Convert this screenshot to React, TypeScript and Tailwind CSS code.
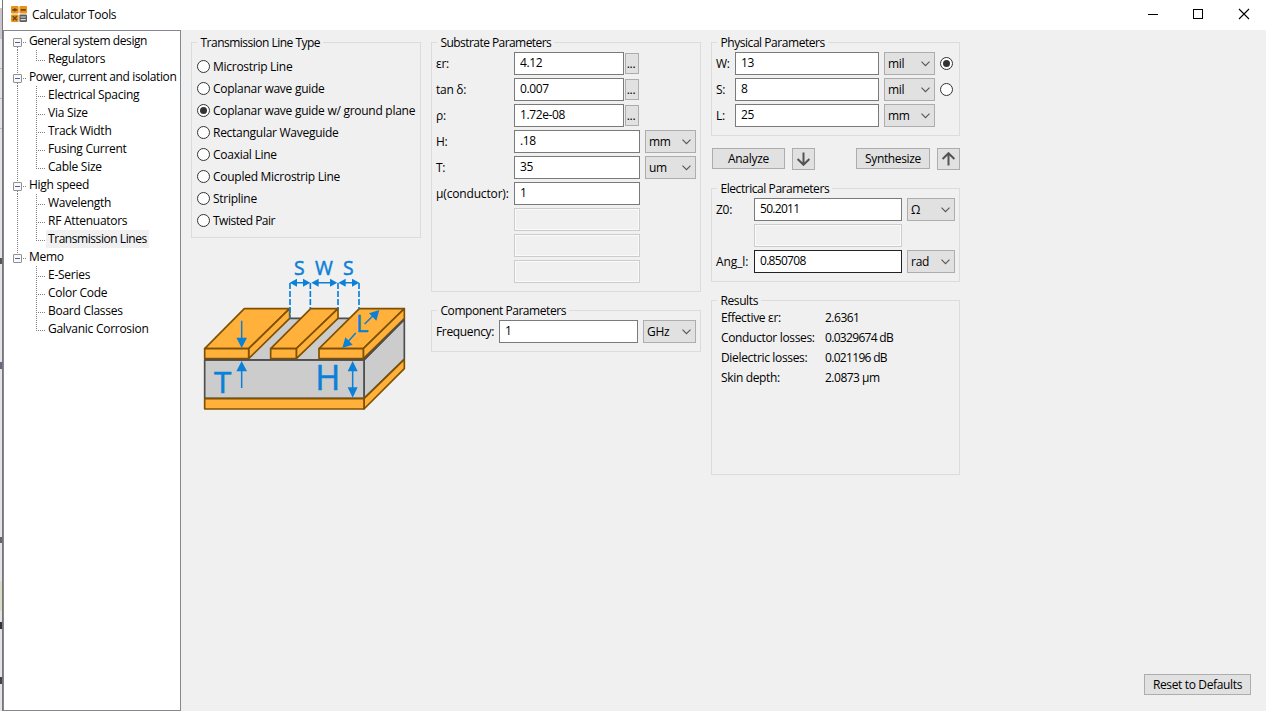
import React, { useState } from "react";

function Group({ title, className, titleClass, children }: { title: string; className: string; titleClass?: string; children?: React.ReactNode }) {
  return (
    <section className={`flex flex-col border border-[#dcdcdc] ${className}`}>
      <h2 className={`-mt-[9px] ml-[5px] h-[18px] self-start whitespace-nowrap bg-[#f0f0f0] pl-[3.5px] pr-[3px] leading-[18px] ${titleClass ?? ""}`}>{title}</h2>
      {children}
    </section>
  );
}

function Field({ value, className, focused }: { value?: string; className: string; focused?: boolean }) {
  const [text, setText] = useState(value ?? "");
  if (value === undefined) {
    return <div className={`h-[23px] border border-[#cccccc] bg-[#f0f0f0] shadow-[inset_0_0_0_1px_#fafafa] ${className}`} />;
  }
  return (
    <input
      value={text}
      onChange={(e) => setText(e.target.value)}
      className={`h-[23px] border bg-white pb-[2px] pl-[5px] outline-none ${value.length > 6 && !value.includes("e") ? "tracking-[-0.7px]" : "tracking-[-0.4px]"} ${focused ? "border-[#222]" : "border-[#7a7a7a]"} ${className}`}
    />
  );
}

function Unit({ label, className }: { label: string; className: string }) {
  return (
    <button className={`flex h-[23px] items-center justify-between border border-[#adadad] bg-[#e1e1e1] pl-[3px] pr-[4px] ${className}`}>
      <span>{label}</span>
      <svg width="9" height="6" viewBox="0 0 9 6" className="shrink-0">
        <path d="M0.5 0.7 L4.5 4.7 L8.5 0.7" fill="none" stroke="#555" strokeWidth="1.1" />
      </svg>
    </button>
  );
}

function Radio({ on }: { on?: boolean }) {
  return (
    <span className="flex size-[13px] shrink-0 items-center justify-center rounded-full border border-[#333] bg-white">
      {on && <span className="size-[7px] rounded-full bg-[#333]" />}
    </span>
  );
}

function PushButton({ children, className }: { children: React.ReactNode; className: string }) {
  return (
    <button className={`flex items-center justify-center whitespace-nowrap border border-[#adadad] bg-[#e1e1e1] ${className}`}>
      {children}
    </button>
  );
}

function Arrow({ up }: { up?: boolean }) {
  return (
    <svg width="15" height="14" viewBox="0 0 15 14" className="-ml-px shrink-0">
      <path
        d={up ? "M7.5 13.5 V1.5 M1.6 7 L7.5 1.2 L13.4 7" : "M7.5 0.5 V12.5 M1.6 7 L7.5 12.8 L13.4 7"}
        fill="none"
        stroke="#545454"
        strokeWidth="2"
      />
    </svg>
  );
}

const tree = [
  { name: "General system design", style: "tracking-[-0.41px]", items: ["Regulators"] },
  { name: "Power, current and isolation", style: "tracking-[-0.38px]", items: ["Electrical Spacing", "Via Size", "Track Width", "Fusing Current", "Cable Size"] },
  { name: "High speed", style: "", items: ["Wavelength", "RF Attenuators", "Transmission Lines"] },
  { name: "Memo", style: "", items: ["E-Series", "Color Code", "Board Classes", "Galvanic Corrosion"] },
];

function Tree() {
  return (
    <nav className="flex w-[178px] shrink-0 flex-col border border-[#828790] bg-white pt-px">
      {tree.map((group, g) => (
        <div key={group.name}>
          <div className="flex h-[18px] items-center">
            <svg width="25" height="18" viewBox="0 0 25 18" className="shrink-0" fill="none">
              {g > 0 && <path d="M13.5 0 V6" stroke="#808080" strokeDasharray="1 1" />}
              {g < 3 && <path d="M13.5 15 V18" stroke="#808080" strokeDasharray="1 1" />}
              <path d="M19 10.5 H23" stroke="#808080" strokeDasharray="1 1" />
              <rect x="9.5" y="6.5" width="8" height="8" rx="0.5" fill="#f8f8f8" stroke="#919191" />
              <path d="M11 10.5 H16" stroke="#4b63a7" />
            </svg>
            <span className={`whitespace-nowrap ${group.style}`}>{group.name}</span>
          </div>
          {group.items.map((item, i) => (
            <div key={item} className="flex h-[18px] items-center">
              <svg width="42" height="18" viewBox="0 0 42 18" className="shrink-0" fill="none">
                {g < 3 && <path d="M13.5 0 V18" stroke="#808080" strokeDasharray="1 1" />}
                <path d={i === group.items.length - 1 ? "M32.5 0 V11" : "M32.5 0 V18"} stroke="#808080" strokeDasharray="1 1" />
                <path d="M34 10.5 H42" stroke="#808080" strokeDasharray="1 1" />
              </svg>
              <span className={`h-[18px] whitespace-nowrap px-[2px] leading-[18px] ${item === "Transmission Lines" ? "bg-[#f0f0f0] tracking-[-0.44px]" : ""}`}>{item}</span>
            </div>
          ))}
        </div>
      ))}
    </nav>
  );
}

function Waveguide() {
  return (
    <svg width="230" height="170" viewBox="0 0 690 510" className="block" strokeLinejoin="round">
      <g stroke="#4d4d4d" strokeWidth="5" fill="#cccccc">
        <path d="M44 330 L170 205 H643 L522 330 Z" />
        <path d="M522 330 L643 208 V327 L522 445 Z" />
        <path d="M44 330 H522 V445 H44 Z" />
      </g>
      <g stroke="#7f5000" strokeWidth="5" fill="#ffb13b">
        <path d="M522 446 L643 328 V356 L522 477 Z" />
        <path d="M44 446 H522 V477 H44 Z" />
        <path d="M44 296 L163 176 H299 L176 296 Z" />
        <path d="M176 296 L299 176 V205 L176 326 Z" />
        <path d="M44 296 H176 V326 H44 Z" />
        <path d="M242 296 L362 176 H444 L319 296 Z" />
        <path d="M319 296 L444 176 V205 L319 326 Z" />
        <path d="M242 296 H319 V326 H242 Z" />
        <path d="M387 296 L508 176 H643 L520 296 Z" />
        <path d="M520 296 L643 176 V206 L520 326 Z" />
        <path d="M387 296 H520 V326 H387 Z" />
      </g>
      <path d="M42 330 H522 L643 208" fill="none" stroke="#4d4d4d" strokeWidth="5" />
      <g stroke="#0b80d8" strokeWidth="5" fill="none">
        <path d="M300 99 V205 M361 99 V176 M444 99 V176 M507 99 V176" strokeDasharray="18 6" />
        <path d="M310 98 H350 M375 98 H432 M455 98 H497 M155 212 V270 M155 355 V414 M488 355 V420 M552 194 L524 222 M497 249 L470 280" strokeWidth="4.5" />
      </g>
      <g fill="#0b80d8">
        <path d="M299 98 l22 -12 v24z M361 98 l-22 -12 v24z M364 98 l22 -12 v24z M442 98 l-22 -12 v24z M445 98 l22 -12 v24z M508 98 l-22 -12 v24z" />
        <path d="M155 294 l-16 -31 h32z M155 333 l-16 31 h32z M488 333 l-15 31 h30z M488 443 l-15 -31 h30z" />
        <path d="M568 180 l-9 32 l-22 -22z M457 294 l9 -32 l22 22z" />
      </g>
      <g fill="#0b80d8" stroke="#0b80d8" strokeWidth="1.5" fontFamily="'Open Sans', sans-serif" letterSpacing="0">
        <text x="312" y="75" fontSize="58">S</text>
        <text x="375" y="75" fontSize="58">W</text>
        <text x="459" y="75" fontSize="58">S</text>
        <text x="498" y="247" fontSize="71">L</text>
        <text x="72" y="430" fontSize="88" textLength="52" lengthAdjust="spacingAndGlyphs">T</text>
        <text x="376" y="420" fontSize="102">H</text>
      </g>
    </svg>
  );
}

const lineTypes = ["Microstrip Line", "Coplanar wave guide", "Coplanar wave guide w/ ground plane", "Rectangular Waveguide", "Coaxial Line", "Coupled Microstrip Line", "Stripline", "Twisted Pair"];

const substrate: { label: string; value?: string; more?: boolean; unit?: string }[] = [
  { label: "εr:", value: "4.12", more: true },
  { label: "tan δ:", value: "0.007", more: true },
  { label: "ρ:", value: "1.72e-08", more: true },
  { label: "H:", value: ".18", unit: "mm" },
  { label: "T:", value: "35", unit: "um" },
  { label: "μ(conductor):", value: "1" },
  { label: "" },
  { label: "" },
  { label: "" },
];

const physical = [
  { label: "W:", value: "13", unit: "mil" },
  { label: "S:", value: "8", unit: "mil" },
  { label: "L:", value: "25", unit: "mm" },
];

const results = [
  ["Effective εr:", "2.6361"],
  ["Conductor losses:", "0.0329674 dB"],
  ["Dielectric losses:", "0.021196 dB"],
  ["Skin depth:", "2.0873 µm"],
];

export default function App() {
  return (
    <div className="flex h-[711px] w-[1266px] overflow-hidden bg-[#f0f0f0] font-['Open_Sans',sans-serif] text-[12px] leading-[18px] tracking-[-0.27px] text-black">
      <div className="flex w-[3px] shrink-0 flex-col border-r border-[#777] bg-[#e4e4e4]">
        <div className="h-[8px] bg-white" />
        <div className="h-[31px] bg-[#c9c5cc]" />
        <div className="mt-[29px] h-px bg-[#bbb]" />
        <div className="mt-[29px] h-px bg-[#bbb]" />
        <div className="mt-[29px] h-px bg-[#bbb]" />
        <div className="mt-[129px] h-[6px] bg-[#555]" />
        <div className="mt-[98px] h-[7px] bg-[#668]" />
        <div className="mt-[168px] h-[6px] bg-[#666]" />
        <div className="mt-[38px] h-[30px] bg-[#dcdcc4]" />
        <div className="mt-[11px] h-[7px] bg-[#333]" />
        <div className="mt-[48px] h-[7px] bg-[#444]" />
      </div>
      <div className="flex flex-1 flex-col">
        <header className="flex h-[30px] shrink-0 items-center bg-white pl-[8px]">
          <svg width="16" height="16" viewBox="0 0 16 16" className="-mt-[2px] mr-[5px] shrink-0">
            <rect width="7.6" height="7.6" rx="1" fill="#e8941a" />
            <rect x="8.4" width="7.6" height="7.6" rx="1" fill="#e8941a" />
            <rect y="8.4" width="7.6" height="7.6" rx="1" fill="#e8941a" />
            <rect x="8.4" y="8.4" width="7.6" height="7.6" rx="1" fill="#5a5a5a" />
            <path d="M1.2 3.9 H6.4 M3.8 2.2 V5.6 M9.8 3.9 H14.8 M1.8 10.2 L5.8 14.2 M5.8 10.2 L1.8 14.2" stroke="#6b4715" strokeWidth="1.6" />
            <path d="M9.6 11 H14.8 M9.6 13.6 H14.8" stroke="#ddd" strokeWidth="1.1" />
          </svg>
          <h1 className="flex-1 tracking-[-0.32px]">Calculator Tools</h1>
          <svg width="118" height="12" viewBox="0 0 118 12" fill="none" stroke="#000" className="mt-[-2px] shrink-0">
            <path d="M0 6.5 H10" />
            <rect x="45.5" y="1.5" width="9" height="9" />
            <path d="M91 1 L101 11 M101 1 L91 11" strokeWidth="1.1" />
          </svg>
        </header>
        <div className="flex flex-1">
          <Tree />
          <main className="flex flex-1 flex-col justify-between pb-[16px] pl-[10px] pr-[15px] pt-[12px]">
            <div className="flex items-start gap-[10px]">
              <div className="flex w-[230px] flex-col">
                <Group title="Transmission Line Type" className="h-[196px]" titleClass="tracking-[-0.51px]">
                  <div className="flex flex-col pt-[4px]">
                    {lineTypes.map((t, i) => (
                      <label key={t} className="flex h-[22px] items-start gap-[3px] whitespace-nowrap pl-[5px] pt-[2px]">
                        <span className="pt-[2px]"><Radio on={i === 2} /></span>
                        <span className={t === "Twisted Pair" ? "tracking-[-0.5px]" : ""}>{t}</span>
                      </label>
                    ))}
                  </div>
                </Group>
                <div className="-ml-px mt-[12px]">
                  <Waveguide />
                </div>
              </div>

              <div className="flex w-[270px] flex-col gap-[18px]">
                <Group title="Substrate Parameters" className="h-[250px]" titleClass="tracking-[-0.56px]">
                  <div className="flex flex-col gap-[3px] pl-[4px]">
                    {substrate.map((r, i) => (
                      <div key={i} className="flex h-[23px] items-center">
                        <span className={`w-[78px] shrink-0 whitespace-nowrap ${r.label.length > 8 ? "tracking-[-0.16px]" : ""}`}>{r.label}</span>
                        <Field value={r.value} className={r.more ? "w-[110px]" : "w-[126px]"} />
                        {r.more && <PushButton className="ml-px h-[21px] w-[14px] pr-[2px] pt-px">...</PushButton>}
                        {r.unit && <Unit label={r.unit} className="ml-[5px] w-[51px]" />}
                      </div>
                    ))}
                  </div>
                </Group>
                <Group title="Component Parameters" className="h-[42px]" titleClass="tracking-[-0.44px]">
                  <div className="flex h-[23px] shrink-0 items-center pl-[4px] pt-0">
                    <span className="w-[63px] tracking-[-0.35px]">Frequency:</span>
                    <Field value="1" className="w-[139px]" />
                    <Unit label="GHz" className="ml-[5px] w-[53px]" />
                  </div>
                </Group>
              </div>

              <div className="flex w-[249px] flex-col">
                <Group title="Physical Parameters" className="h-[94px]" titleClass="tracking-[-0.45px]">
                  <div className="flex flex-col gap-[3px] pl-[4px]">
                    {physical.map((r, i) => (
                      <div key={r.label} className="flex h-[23px] items-center">
                        <span className="w-[19px] shrink-0">{r.label}</span>
                        <Field value={r.value} className="w-[144px]" />
                        <Unit label={r.unit} className="ml-[5px] mr-[5px] w-[51px]" />
                        {i < 2 && <Radio on={i === 0} />}
                      </div>
                    ))}
                  </div>
                </Group>
                <div className="mt-[12px] flex items-start pl-px">
                  <PushButton className="h-[21px] w-[73px]">Analyze</PushButton>
                  <PushButton className="ml-[7px] h-[22px] w-[23px]"><Arrow /></PushButton>
                  <PushButton className="ml-auto h-[21px] w-[74px] tracking-[-0.35px]">Synthesize</PushButton>
                  <PushButton className="ml-[7px] h-[22px] w-[23px]"><Arrow up /></PushButton>
                </div>
                <Group title="Electrical Parameters" className="mt-[18px] h-[94px]" titleClass="tracking-[-0.44px]">
                  <div className="flex flex-col gap-[3px] pl-[4px]">
                    <div className="flex h-[23px] items-center">
                      <span className="w-[38px] shrink-0">Z0:</span>
                      <Field value="50.2011" className="w-[148px]" />
                      <Unit label="Ω" className="ml-[5px] w-[48px]" />
                    </div>
                    <Field className="ml-[38px] w-[148px]" />
                    <div className="flex h-[23px] items-center">
                      <span className="w-[38px] shrink-0 tracking-[-0.1px]">Ang_l:</span>
                      <Field value="0.850708" className="w-[148px]" focused />
                      <Unit label="rad" className="ml-[5px] w-[48px]" />
                    </div>
                  </div>
                </Group>
                <Group title="Results" className="mt-[18px] h-[175px]" titleClass="tracking-[-0.4px]">
                  <dl className="-mt-px grid auto-rows-[20px] grid-cols-[104px_1fr] whitespace-nowrap pl-[9px] leading-[18px]">
                    {results.map(([k, v]) => (
                      <React.Fragment key={k}>
                        <dt className="tracking-[-0.34px]">{k}</dt>
                        <dd className={v.endsWith("dB") ? "tracking-[-0.68px]" : "tracking-[-0.5px]"}>{v}</dd>
                      </React.Fragment>
                    ))}
                  </dl>
                </Group>
              </div>
            </div>
            <PushButton className="h-[21px] w-[107px] self-end tracking-[-0.35px]">Reset to Defaults</PushButton>
          </main>
        </div>
      </div>
    </div>
  );
}
